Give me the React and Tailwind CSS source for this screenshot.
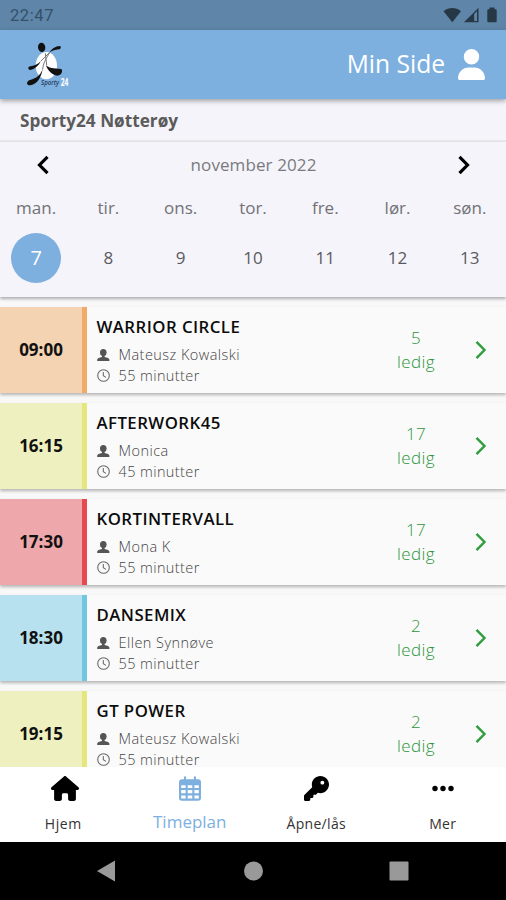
import React, { useState } from "react";
import { FaHouse, FaKey, FaUser } from "react-icons/fa6";

const days = [
  { name: "man.", date: 7 },
  { name: "tir.", date: 8 },
  { name: "ons.", date: 9 },
  { name: "tor.", date: 10 },
  { name: "fre.", date: 11 },
  { name: "lør.", date: 12 },
  { name: "søn.", date: 13 },
];

const classes = [
  { time: "09:00", title: "WARRIOR CIRCLE", trainer: "Mateusz Kowalski", minutes: 55, free: 5, color: "bg-[#f3d3b2] border-[#f2ab67]" },
  { time: "16:15", title: "AFTERWORK45", trainer: "Monica", minutes: 45, free: 17, color: "bg-[#eef1bf] border-[#e5e67c]" },
  { time: "17:30", title: "KORTINTERVALL", trainer: "Mona K", minutes: 55, free: 17, color: "bg-[#eea7ab] border-[#e6494f]" },
  { time: "18:30", title: "DANSEMIX", trainer: "Ellen Synnøve", minutes: 55, free: 2, color: "bg-[#b8e1ef] border-[#71c6e0]" },
  { time: "19:15", title: "GT POWER", trainer: "Mateusz Kowalski", minutes: 55, free: 2, color: "bg-[#eef1bf] border-[#e5e67c]" },
];

function StatusBar() {
  return (
    <div className="flex h-[30px] shrink-0 items-center justify-between bg-[#5f86a8] pr-[9px] pl-[10px] text-[#263846]">
      <span className="pt-[2px] font-[Roboto] text-[16.5px] tracking-[0.6px] text-[#34506a]">22:47</span>
      <svg width="54" height="18" viewBox="0 0 54 18">
        <path d="M0.5 5.2C5.6 0.9 13 0.9 18 5.2L9.3 16.2Z" fill="currentColor" />
        <path d="M21 16.3L35.5 1.8V16.3Z" fill="currentColor" />
        <path d="M31.2 8L34 5.2V15H31.2Z" fill="#5f86a8" />
        <path d="M46.5 1.5h5v1.8h1.2q1 0 1 1v11q0 1-1 1h-7.4q-1 0-1-1v-11q0-1 1-1h1.2Z" fill="currentColor" />
      </svg>
    </div>
  );
}

function Logo() {
  return (
    <svg width="60" height="60" viewBox="0 0 180 180">
      <ellipse cx="94" cy="92" rx="32" ry="41" fill="#fff" />
      <ellipse cx="80" cy="37" rx="11" ry="14" fill="#111" transform="rotate(-8 80 37)" />
      <path d="M102 54C110 42 121 33 135 33C139 36 138 41 133 43C118 45 109 47 102 54Z" fill="#111" />
      <path d="M78 78C68 88 57 93 46 94C38 95 38 104 46 105C59 102 70 93 78 78Z" fill="#111" />
      <path d="M92 89C101 100 115 99 139 102C144 108 140 121 127 122C111 120 99 107 92 89Z" fill="#111" />
      <path d="M83 103C74 123 66 129 45 135C33 139 33 152 47 151C68 147 78 127 83 103Z" fill="#111" />
      <path d="M104 53C94 70 84 84 83 104M91 55L95 90M102 54L78 78" fill="none" stroke="#777" strokeWidth="3" />
      <text x="78" y="149" fontFamily="Open Sans, sans-serif" fontSize="22" fontStyle="italic" fontWeight="600" textLength="54" lengthAdjust="spacingAndGlyphs" fill="#25405b">Sporty</text>
      <text x="137" y="154" fontFamily="Open Sans, sans-serif" fontSize="31" fontWeight="700" textLength="23" lengthAdjust="spacingAndGlyphs" fill="#fff">24</text>
    </svg>
  );
}

function Chevron({ left, className, width = 4 }) {
  return (
    <svg width="12" height="20" viewBox="0 0 12 20" className={className}>
      <path
        d={left ? "M10.5 1.8L2.5 10L10.5 18.2" : "M1.5 1.8L9.5 10L1.5 18.2"}
        fill="none"
        stroke="currentColor"
        strokeWidth={width}
      />
    </svg>
  );
}

function PersonIcon() {
  return (
    <svg width="13" height="12" viewBox="0 0 13 12" fill="#555">
      <ellipse cx="6.3" cy="3.5" rx="3.3" ry="3.5" />
      <path d="M0.2 12V10.6C0.2 9 2.4 8.5 5 7.9V6H7.6V7.9C10.2 8.5 12.4 9 12.4 10.6V12Z" />
    </svg>
  );
}

function ClockIcon() {
  return (
    <svg width="13" height="13" viewBox="0 0 13 13" fill="none" stroke="#6b6b6b" strokeWidth="1.1">
      <circle cx="6.5" cy="6.5" r="5.8" />
      <path d="M6.3 3V6.8L9 8.4" />
    </svg>
  );
}

function CalendarIcon() {
  return (
    <svg width="22" height="25" viewBox="0 0 22 25" className="mt-[9px]">
      <path
        fill="currentColor"
        fillRule="evenodd"
        d="M5 1.2Q5 0.2 6 0.2Q7.1 0.2 7.1 1.2V3.2H14.9V1.2Q14.9 0.2 16 0.2Q17 0.2 17 1.2V3.2H19Q22 3.2 22 6.2V22Q22 24.8 19 24.8H3Q0 24.8 0 22V6.2Q0 3.2 3 3.2H5ZM2.2 9.2V12H6.6V9.2ZM8.7 9.2V12H13.3V9.2ZM15.4 9.2V12H19.8V9.2ZM2.2 14.1V17.3H6.6V14.1ZM8.7 14.1V17.3H13.3V14.1ZM15.4 14.1V17.3H19.8V14.1ZM2.2 19.4V22.6H6.6V19.4ZM8.7 19.4V22.6H13.3V19.4ZM15.4 19.4V22.6H19.8V19.4Z"
      />
    </svg>
  );
}

function ClassRow({ item }) {
  return (
    <div className="flex h-[86px] shrink-0 bg-[#fafafa] shadow-[0_2px_3px_rgba(0,0,0,0.27)]">
      <div className={`flex w-[87px] items-center justify-center border-r-[5px] text-[17px] font-bold text-[#111] ${item.color}`}>
        {item.time}
      </div>
      <div className="flex-1 pt-[9px] pl-[9.5px]">
        <h2 className="text-[16.8px] leading-[22px] font-semibold tracking-[0.45px] text-[#0c0c0c]">{item.title}</h2>
        <div className="mt-[6px] flex h-[21px] items-center text-[14.5px] font-light tracking-[0.45px] text-[#444]">
          <span className="w-[22px]"><PersonIcon /></span>
          {item.trainer}
        </div>
        <div className="flex h-[21px] items-center text-[14.5px] font-light tracking-[0.4px] text-[#444]">
          <span className="w-[22px]"><ClockIcon /></span>
          {item.minutes} minutter
        </div>
      </div>
      <div className="mr-[38px] flex w-[42px] flex-col items-center justify-center text-[17px] leading-[24px] font-light tracking-[0.4px] text-[#2b943a]">
        <span>{item.free}</span>
        <span>ledig</span>
      </div>
      <div className="flex w-[31px] items-center">
        <Chevron className="text-[#309c3d]" width={2.4} />
      </div>
    </div>
  );
}

function BottomNav() {
  return (
    <nav className="grid h-[75px] shrink-0 grid-cols-4 bg-white text-[14px] text-[#333]">
      <div className="flex flex-col items-center">
        <FaHouse className="mt-[9px] ml-[3px] h-[25px] w-[28px] text-black" />
        <span className="mt-[12px] tracking-[0.6px]">Hjem</span>
      </div>
      <div className="flex flex-col items-center text-[#7dafdf]">
        <CalendarIcon />
        <span className="mt-[8px] text-[17px] leading-[25px]">Timeplan</span>
      </div>
      <div className="flex flex-col items-center">
        <FaKey className="mt-[9px] h-[25px] w-[25px] text-black" />
        <span className="mt-[12px] tracking-[0.3px]">Åpne/lås</span>
      </div>
      <div className="flex flex-col items-center">
        <svg width="22" height="25" viewBox="0 0 22 25" className="mt-[9px]">
          <circle cx="3" cy="12.5" r="2.7" />
          <circle cx="11" cy="12.5" r="2.7" />
          <circle cx="19" cy="12.5" r="2.7" />
        </svg>
        <span className="mt-[12px] tracking-[0.3px]">Mer</span>
      </div>
    </nav>
  );
}

function App() {
  const [selected, setSelected] = useState(7);

  return (
    <div className="flex h-[900px] w-[506px] flex-col overflow-hidden bg-[#f8f8f8] font-['Open_Sans',sans-serif]">
      <StatusBar />
      <header className="z-10 flex h-[69px] shrink-0 items-center justify-between bg-[#7dafdf] pr-[21px] pl-[15px] shadow-[0_2px_5px_rgba(0,0,0,0.35)]">
        <Logo />
        <div className="flex items-center text-white">
          <span className="text-[24.6px]">Min Side</span>
          <FaUser className="ml-[13px] h-[31px] w-[27px]" />
        </div>
      </header>

      <div className="flex h-[43px] shrink-0 items-center border-b-2 border-[#e7e7ea] bg-[#f5f4fa] pt-[2px] pl-5 text-[17.2px] font-bold text-[#5b5b5b]">
        Sporty24 Nøtterøy
      </div>

      <section className="h-[155px] shrink-0 bg-[#f5f4fa] shadow-[0_2px_3px_rgba(0,0,0,0.3)]">
        <div className="flex h-[46px] items-center justify-between pr-[36px] pl-[37px]">
          <Chevron left className="text-black" width={3.2} />
          <span className="text-[17px] tracking-[0.1px] text-[#7a7a7e]">november 2022</span>
          <Chevron className="text-black" width={3.2} />
        </div>
        <div className="mt-px grid grid-cols-7">
          {days.map((day) => (
            <div key={day.date} className="flex flex-col items-center" onClick={() => setSelected(day.date)}>
              <span className="h-[38px] pt-[6px] text-[17px] leading-[26px] text-[#727276]">{day.name}</span>
              <span
                className={`mt-[6px] flex h-[50px] w-[50px] items-center justify-center rounded-full ${
                  selected === day.date ? "bg-[#7dafdf] text-[20px] text-white" : "text-[17px] text-[#5a5a5e]"
                }`}
              >
                {day.date}
              </span>
            </div>
          ))}
        </div>
      </section>

      <main className="flex min-h-0 flex-1 flex-col gap-[10px] overflow-hidden pt-[10px]">
        {classes.map((item) => (
          <ClassRow key={item.time} item={item} />
        ))}
      </main>

      <BottomNav />

      <div className="flex h-[58px] shrink-0 items-center justify-center bg-black">
        <svg width="506" height="58" viewBox="0 0 506 58" fill="#999">
          <path d="M97 29L115 18.5V39.5Z" />
          <circle cx="253.5" cy="29" r="9.5" />
          <rect x="389.5" y="19.5" width="19" height="19" rx="1" />
        </svg>
      </div>
    </div>
  );
}

export default App;
